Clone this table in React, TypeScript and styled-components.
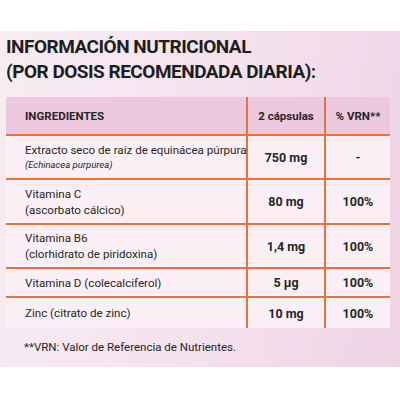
import styled, { createGlobalStyle } from "styled-components";

const GlobalStyle = createGlobalStyle`
    html, body {
        margin: 0;
        padding: 0;
        background: #ffffff;
    }
`;

const ORANGE = "#e8733f";
const INK = "#262626";

const Page = styled.div`
    width: 400px;
    height: 400px;
    padding-top: 31px;
    box-sizing: border-box;
    font-family: "Roboto", "Liberation Sans", sans-serif;
    color: ${INK};
`;

const Panel = styled.section`
    height: 336px;
    background: linear-gradient(100deg, #f8edf3 0%, #f4e0ec 60%, #efd4e5 100%);
    padding: 3px 10px 0 6px;
    box-sizing: border-box;
`;

const Title = styled.h1`
    margin: 0 0 13px 0;
    font-size: 19px;
    line-height: 25px;
    font-weight: 700;
    letter-spacing: -0.5px;
    color: #1e1e1e;
`;

const Table = styled.table`
    width: 384px;
    table-layout: fixed;
    border-collapse: collapse;
    background: #fcf0f6;
    font-size: 11.6px;
`;

const HeadRow = styled.tr`
    background: #ecc9df;
    height: 38px;
`;

const Th = styled.th<{ $align?: string }>`
    text-align: ${p => p.$align ?? "center"};
    padding: 0 0 0 ${p => (p.$align === "left" ? "19px" : "0")};
    font-weight: 700;
    font-size: 11.5px;
    border-bottom: 2px solid ${ORANGE};
    border-left: ${p => (p.$align === "left" ? "none" : `2px solid ${ORANGE}`)};
`;

const Row = styled.tr<{ $h: number; $last?: boolean }>`
    height: ${p => p.$h}px;
    & > td {
        border-bottom: ${p => (p.$last ? "none" : `2px solid ${ORANGE}`)};
    }
`;

const NameCell = styled.td`
    padding: 0 0 0 19px;
    line-height: 16px;
    vertical-align: middle;
    white-space: nowrap;
`;

const Sub = styled.span`
    display: block;
    font-style: italic;
    font-size: 9.5px;
    line-height: 14px;
`;

const ValueCell = styled.td`
    text-align: center;
    font-weight: 700;
    font-size: 12.5px;
    border-left: 2px solid ${ORANGE};
`;

const Note = styled.p`
    margin: 12px 0 0 18px;
    font-size: 11.5px;
`;

const rows = [
    { name: "Extracto seco de raíz de equinácea púrpura", sub: "(Echinacea purpurea)", dose: "750 mg", vrn: "-", h: 44 },
    { name: "Vitamina C", sub2: "(ascorbato cálcico)", dose: "80 mg", vrn: "100%", h: 45 },
    { name: "Vitamina B6", sub2: "(clorhidrato de piridoxina)", dose: "1,4 mg", vrn: "100%", h: 44 },
    { name: "Vitamina D (colecalciferol)", dose: "5 µg", vrn: "100%", h: 29 },
    { name: "Zinc (citrato de zinc)", dose: "10 mg", vrn: "100%", h: 31 },
];

export default function App() {
    return <Page>
        <GlobalStyle />
        <Panel>
            <Title>
                INFORMACIÓN NUTRICIONAL<br />
                (POR DOSIS RECOMENDADA DIARIA):
            </Title>
            <Table>
                <colgroup>
                    <col style={{ width: 241 }} />
                    <col style={{ width: 78 }} />
                    <col style={{ width: 65 }} />
                </colgroup>
                <thead>
                    <HeadRow>
                        <Th $align="left">INGREDIENTES</Th>
                        <Th>2 cápsulas</Th>
                        <Th>% VRN**</Th>
                    </HeadRow>
                </thead>
                <tbody>
                    {rows.map((r, i) => (
                        <Row key={r.name} $h={r.h} $last={i === rows.length - 1}>
                            <NameCell>
                                {r.name}
                                {r.sub && <Sub>{r.sub}</Sub>}
                                {r.sub2 && <><br />{r.sub2}</>}
                            </NameCell>
                            <ValueCell>{r.dose}</ValueCell>
                            <ValueCell>{r.vrn}</ValueCell>
                        </Row>
                    ))}
                </tbody>
            </Table>
            <Note>**VRN: Valor de Referencia de Nutrientes.</Note>
        </Panel>
    </Page>;
}
